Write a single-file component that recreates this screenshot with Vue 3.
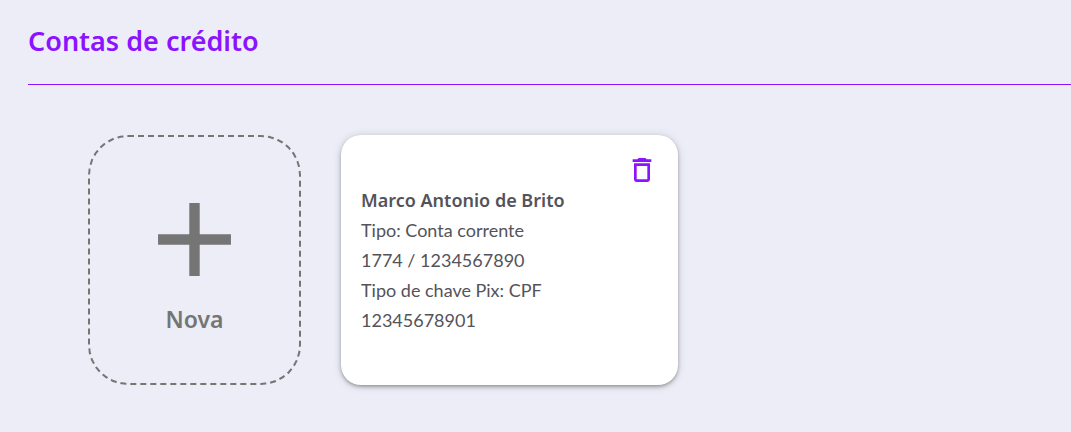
<script setup>
const accounts = [
  {
    holder: 'Marco Antonio de Brito',
    lines: ['Tipo: Conta corrente', '1774 / 1234567890', 'Tipo de chave Pix: CPF', '12345678901'],
  },
]
</script>

<template>
  <main class="page">
    <h1 class="title">Contas de crédito</h1>
    <div class="cards">
      <button type="button" class="new-card">
        <svg class="plus" viewBox="0 0 24 24" aria-hidden="true">
          <path d="M19 13h-6v6h-2v-6H5v-2h6V5h2v6h6v2z" />
        </svg>
        <span class="new-label">Nova</span>
      </button>
      <article v-for="account in accounts" :key="account.holder" class="card">
        <button type="button" class="remove" aria-label="Excluir conta">
          <svg viewBox="0 0 24 24" aria-hidden="true">
            <path d="M6 19c0 1.1.9 2 2 2h8c1.1 0 2-.9 2-2V7H6v12zM8 9h8v10H8V9zm7.5-5l-1-1h-5l-1 1H5v2h14V4h-3.5z" />
          </svg>
        </button>
        <h2 class="holder">{{ account.holder }}</h2>
        <p v-for="line in account.lines" :key="line" class="line">{{ line }}</p>
      </article>
    </div>
  </main>
</template>

<style>
body {
  margin: 0;
  background: #ecedf6;
}
</style>

<style scoped>
.page {
  box-sizing: border-box;
  min-height: 100vh;
  padding-left: 28px;
  font-family: "Noto Sans", "Open Sans", sans-serif;
  color: #54535a;
}

.title {
  margin: 0;
  padding: 21px 0 23px;
  border-bottom: 1px solid #8c13ff;
  font-size: 27px;
  line-height: 40px;
  font-weight: 600;
  color: #8c13ff;
}

.cards {
  display: flex;
  flex-wrap: wrap;
  gap: 40px;
  padding: 50px 60px 40px;
}

.new-card {
  box-sizing: border-box;
  display: flex;
  flex-direction: column;
  align-items: center;
  justify-content: center;
  width: 213px;
  min-height: 250px;
  padding: 0 0 8px;
  border: 2px dashed #757575;
  border-radius: 40px;
  background: none;
  font-family: inherit;
  color: #757575;
  cursor: pointer;
}

.plus {
  width: 125px;
  height: 125px;
  fill: currentColor;
}

.new-label {
  font-size: 23px;
  line-height: 34px;
  font-weight: 600;
}

.card {
  box-sizing: border-box;
  display: flex;
  flex-direction: column;
  width: 337px;
  min-height: 250px;
  padding: 20px;
  border-radius: 20px;
  background: #fff;
  box-shadow: 0 2px 4px -1px rgba(0, 0, 0, 0.4), 0 1px 8px rgba(0, 0, 0, 0.16);
}

.remove {
  align-self: flex-end;
  display: flex;
  align-items: center;
  height: 30px;
  padding: 0;
  border: 0;
  background: none;
  color: #8c13ff;
  cursor: pointer;
}

.remove svg {
  display: block;
  width: 32px;
  height: 32px;
  fill: currentColor;
}

.holder,
.line {
  margin: 0;
  font-size: 18px;
  line-height: 30px;
}

.holder {
  font-weight: 600;
}

.line {
  font-family: Lato, "Noto Sans", sans-serif;
  font-weight: 400;
}
</style>
